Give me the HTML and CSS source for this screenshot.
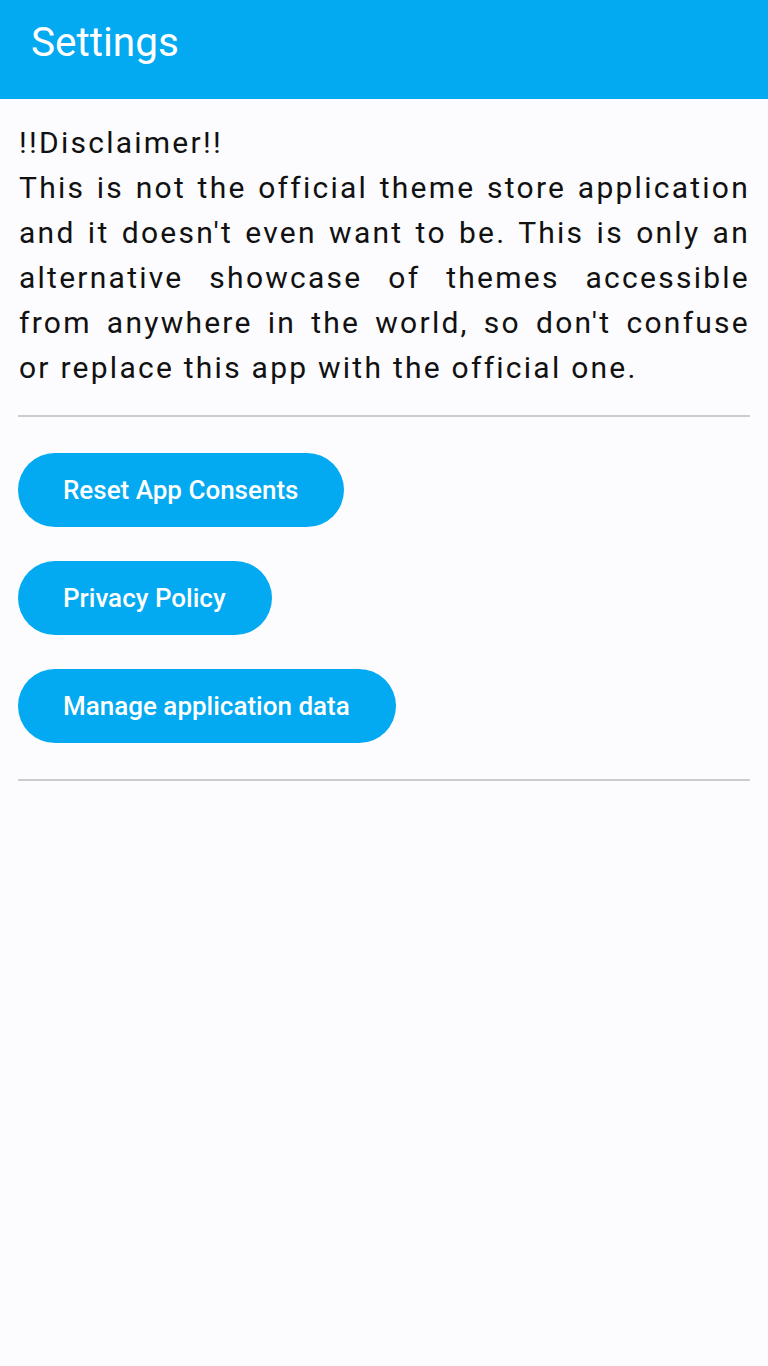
FILE: index.html
```html
<!DOCTYPE html>
<html lang="en">
<head>
<meta charset="utf-8">
<title>Settings</title>
<link rel="stylesheet" href="styles.css">
</head>
<body>
<header class="appbar">
  <h1 class="appbar-title">Settings</h1>
</header>
<main class="content">
  <p class="disclaimer">!!Disclaimer!!<br>This is not the official theme store application and it doesn't even want to be. This is only an alternative showcase of themes accessible from anywhere in the world, so don't confuse or replace this app with the official one.</p>
  <hr class="divider">
  <div class="actions">
    <button class="pill">Reset App Consents</button>
    <button class="pill">Privacy Policy</button>
    <button class="pill">Manage application data</button>
  </div>
  <hr class="divider">
</main>
</body>
</html>
```
FILE: styles.css
```css
html, body {
  margin: 0;
  padding: 0;
}
body {
  background: #fcfcfe;
  font-family: Roboto, "Noto Sans", sans-serif;
  width: 768px;
  min-height: 1366px;
}
.appbar {
  background: #03a9f1;
  height: 99px;
  display: flex;
  align-items: center;
  padding: 0 31px;
  box-sizing: border-box;
}
.appbar-title {
  margin: 0;
  color: #ffffff;
  font-size: 40.5px;
  font-weight: 400;
  line-height: 1;
  padding-bottom: 14px;
}
.content {
  padding: 0 18px 0 19px;
}
.disclaimer {
  margin: 0;
  padding-top: 21px;
  font-size: 30px;
  line-height: 45px;
  letter-spacing: 2.25px;
  text-align: justify;
  color: #111111;
}
.divider {
  margin: 25px 0 0 -1px;
  border: none;
  height: 2px;
  background: #cccccc;
}
.actions {
  display: flex;
  flex-direction: column;
  align-items: flex-start;
  gap: 34px;
  padding: 36px 0 36px 0;
  margin-left: -1px;
}
.actions + .divider {
  margin-top: 0;
}
.pill {
  border: none;
  background: #03a9f1;
  color: #ffffff;
  font-family: Roboto, "Noto Sans", sans-serif;
  font-size: 26px;
  font-weight: 500;
  height: 74px;
  padding: 0 46px 0 45px;
  border-radius: 37px;
}
```
